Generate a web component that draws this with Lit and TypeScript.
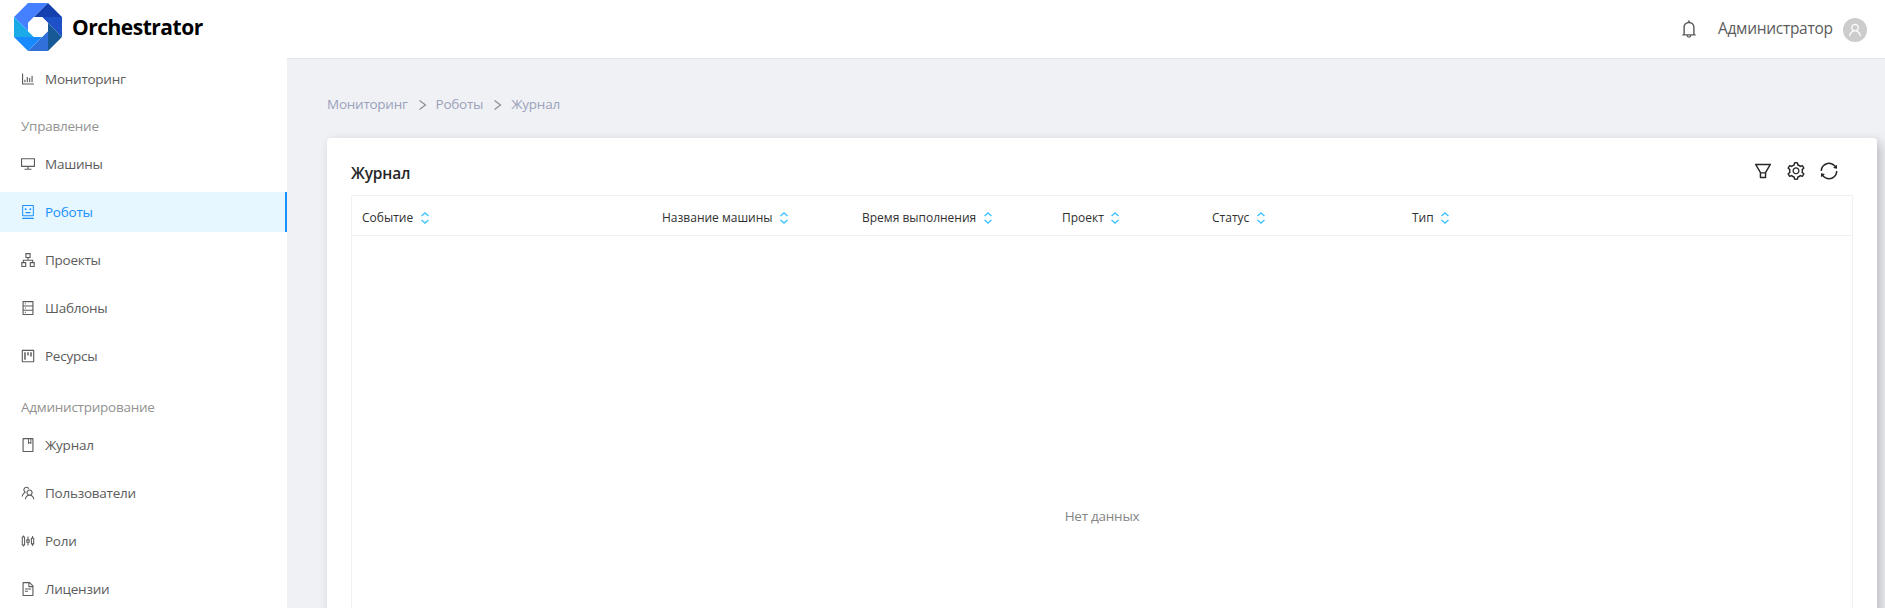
import { LitElement, html, css, svg } from "lit";
import { customElement, property } from "lit/decorators.js";

const ICONS: Record<string, string> = {
  chart: "M888 792H200V168c0-4.4-3.6-8-8-8h-56c-4.4 0-8 3.6-8 8v688c0 4.4 3.6 8 8 8h752c4.4 0 8-3.6 8-8v-56c0-4.4-3.6-8-8-8zM288 712h56c4.4 0 8-3.6 8-8V560c0-4.4-3.6-8-8-8h-56c-4.4 0-8 3.6-8 8v144c0 4.4 3.6 8 8 8zM440 712h56c4.4 0 8-3.6 8-8V384c0-4.4-3.6-8-8-8h-56c-4.4 0-8 3.6-8 8v320c0 4.4 3.6 8 8 8zM592 712h56c4.4 0 8-3.6 8-8V462c0-4.4-3.6-8-8-8h-56c-4.4 0-8 3.6-8 8v242c0 4.4 3.6 8 8 8zM744 712h56c4.4 0 8-3.6 8-8V304c0-4.4-3.6-8-8-8h-56c-4.4 0-8 3.6-8 8v400c0 4.4 3.6 8 8 8z",
  desktop: "M928 140H96c-17.7 0-32 14.3-32 32v496c0 17.7 14.3 32 32 32h380v112H304c-8.8 0-16 7.2-16 16v48c0 4.4 3.6 8 8 8h432c4.4 0 8-3.6 8-8v-48c0-8.8-7.2-16-16-16H548V700h380c17.7 0 32-14.3 32-32V172c0-17.7-14.3-32-32-32zm-40 488H136V212h752v416z",
  robot: "M300 328a60 60 0 1 0 120 0 60 60 0 1 0-120 0zM852 64H172c-17.7 0-32 14.3-32 32v660c0 17.7 14.3 32 32 32h680c17.7 0 32-14.3 32-32V96c0-17.7-14.3-32-32-32zm-32 660H204V128h616v596zM604 328a60 60 0 1 0 120 0 60 60 0 1 0-120 0zm250.2 556H169.8c-16.5 0-29.8 14.3-29.8 32v36c0 4.4 3.3 8 7.4 8h729.1c4.1 0 7.4-3.6 7.4-8v-36c.1-17.7-13.2-32-29.7-32zM664 508H360c-4.4 0-8 3.6-8 8v60c0 4.4 3.6 8 8 8h304c4.4 0 8-3.6 8-8v-60c0-4.4-3.6-8-8-8z",
  cluster: "M344 64h336v320H548v108h298v148h98v320H624V640h150v-76H250v76h150v320H80V640h98V492h298V384H344zM416 136v176h192V136zM152 712v176h176V712zM696 712v176h176V712z",
  database: "M832 64H192c-17.7 0-32 14.3-32 32v832c0 17.7 14.3 32 32 32h640c17.7 0 32-14.3 32-32V96c0-17.7-14.3-32-32-32zm-600 72h560v208H232V136zm560 480H232V408h560v208zm0 272H232V680h560v208zM304 240a40 40 0 1 0 80 0 40 40 0 1 0-80 0zm0 272a40 40 0 1 0 80 0 40 40 0 1 0-80 0zm0 272a40 40 0 1 0 80 0 40 40 0 1 0-80 0z",
  project: "M280 752h80c4.4 0 8-3.6 8-8V280c0-4.4-3.6-8-8-8h-80c-4.4 0-8 3.6-8 8v464c0 4.4 3.6 8 8 8zm192-280h80c4.4 0 8-3.6 8-8V280c0-4.4-3.6-8-8-8h-80c-4.4 0-8 3.6-8 8v184c0 4.4 3.6 8 8 8zm192 72h80c4.4 0 8-3.6 8-8V280c0-4.4-3.6-8-8-8h-80c-4.4 0-8 3.6-8 8v256c0 4.4 3.6 8 8 8zm216-432H144c-17.7 0-32 14.3-32 32v736c0 17.7 14.3 32 32 32h736c17.7 0 32-14.3 32-32V144c0-17.7-14.3-32-32-32zm-40 728H184V184h656v656z",
  book: "M832 64H192c-17.7 0-32 14.3-32 32v832c0 17.7 14.3 32 32 32h640c17.7 0 32-14.3 32-32V96c0-17.7-14.3-32-32-32zm-260 72h96v209.9L621.5 312 572 347.4V136zm220 752H232V136h280v296.9c0 3.3 1 6.6 3 9.3a15.9 15.9 0 0 0 22.3 3.7l83.8-59.9 81.4 59.4c2.7 2 6 3.1 9.4 3.1 8.8 0 16-7.2 16-16V136h64v752z",
  team: "M824.2 699.9a301.55 301.55 0 0 0-86.4-60.4C783.1 602.8 812 546.8 812 484c0-110.8-92.4-201.7-203.2-200-109.1 1.7-197 90.6-197 200 0 62.8 29 118.8 74.2 155.5a300.95 300.95 0 0 0-86.4 60.4C345 754.6 314 826.8 312 903.8a8 8 0 0 0 8 8.2h56c4.3 0 7.9-3.4 8-7.7 1.9-58 25.4-112.3 66.7-153.5A226.62 226.62 0 0 1 612 684c60.9 0 118.2 23.7 161.3 66.8C814.6 792 838 846.3 840 904.3c.1 4.3 3.7 7.7 8 7.7h56a8 8 0 0 0 8-8.2c-2-77-33-149.2-87.8-203.9zM612 612c-34.2 0-66.4-13.3-90.5-37.5a126.86 126.86 0 0 1-37.5-91.8c.3-32.8 13.4-64.5 36.3-88 24-24.6 56.1-38.3 90.4-38.7 33.9-.3 66.8 12.9 91 36.6 24.8 24.3 38.4 56.8 38.4 91.4 0 34.2-13.3 66.3-37.5 90.5A127.3 127.3 0 0 1 612 612zM361.5 510.4c-.9-8.7-1.4-17.5-1.4-26.4 0-15.9 1.5-31.4 4.3-46.5.7-3.6-1.2-7.3-4.5-8.8-13.6-6.1-26.1-14.5-36.9-25.1a127.54 127.54 0 0 1-38.7-95.4c.9-32.1 13.8-62.6 36.3-85.6 24.7-25.3 57.9-39.1 93.2-38.7 31.9.3 62.7 12.6 86 34.4 7.9 7.4 14.7 15.6 20.4 24.4 2 3.1 5.9 4.4 9.3 3.2 17.6-6.1 36.2-10.4 55.3-12.4 5.6-.6 8.8-6.6 6.3-11.6-32.5-64.3-98.9-108.7-175.7-109.9-110.9-1.7-203.3 89.2-203.3 199.9 0 62.8 28.9 118.8 74.2 155.5-31.8 14.7-61.1 35-86.5 60.4-54.8 54.7-85.8 126.9-87.8 204a8 8 0 0 0 8 8.2h56.1c4.3 0 7.9-3.4 8-7.7 1.9-58 25.4-112.3 66.7-153.5 29.4-29.4 65.4-49.8 104.7-59.7 3.9-1 6.5-4.7 6-8.7z",
  sliders: "M320 224h-66v-56c0-4.4-3.6-8-8-8h-52c-4.4 0-8 3.6-8 8v56h-66c-4.4 0-8 3.6-8 8v560c0 4.4 3.6 8 8 8h66v56c0 4.4 3.6 8 8 8h52c4.4 0 8-3.6 8-8v-56h66c4.4 0 8-3.6 8-8V232c0-4.4-3.6-8-8-8zm-60 508h-80V292h80v440zm644-436h-66v-96c0-4.4-3.6-8-8-8h-52c-4.4 0-8 3.6-8 8v96h-66c-4.4 0-8 3.6-8 8v416c0 4.4 3.6 8 8 8h66v96c0 4.4 3.6 8 8 8h52c4.4 0 8-3.6 8-8v-96h66c4.4 0 8-3.6 8-8V304c0-4.4-3.6-8-8-8zm-60 364h-80V364h80v296zM612 404h-66V232c0-4.4-3.6-8-8-8h-52c-4.4 0-8 3.6-8 8v172h-66c-4.4 0-8 3.6-8 8v200c0 4.4 3.6 8 8 8h66v172c0 4.4 3.6 8 8 8h52c4.4 0 8-3.6 8-8V620h66c4.4 0 8-3.6 8-8V412c0-4.4-3.6-8-8-8zm-60 145a3 3 0 0 1-3 3h-74a3 3 0 0 1-3-3v-74a3 3 0 0 1 3-3h74a3 3 0 0 1 3 3v74z",
  file: "M854.6 288.6L639.4 73.4c-6-6-14.1-9.4-22.6-9.4H192c-17.7 0-32 14.3-32 32v832c0 17.7 14.3 32 32 32h640c17.7 0 32-14.3 32-32V311.3c0-8.5-3.4-16.7-9.4-22.7zM790.2 326H602V137.8L790.2 326zm1.8 562H232V136h302v216a42 42 0 0 0 42 42h216v494zM504 618H320c-4.4 0-8 3.6-8 8v48c0 4.4 3.6 8 8 8h184c4.4 0 8-3.6 8-8v-48c0-4.4-3.6-8-8-8zM312 490v48c0 4.4 3.6 8 8 8h384c4.4 0 8-3.6 8-8v-48c0-4.4-3.6-8-8-8H320c-4.4 0-8 3.6-8 8z",
  bell: "M816 768h-24V428c0-141.1-104.3-257.7-240-277.1V112c0-22.1-17.9-40-40-40s-40 17.9-40 40v38.9c-135.7 19.4-240 136-240 277.1v340h-24c-17.7 0-32 14.3-32 32v32c0 4.4 3.6 8 8 8h216c0 61.8 50.2 112 112 112s112-50.2 112-112h216c4.4 0 8-3.6 8-8v-32c0-17.7-14.3-32-32-32zM512 888c-26.5 0-48-21.5-48-48h96c0 26.5-21.5 48-48 48zM304 768V428c0-55.6 21.6-107.8 60.9-147.1S456.4 220 512 220c55.6 0 107.8 21.6 147.1 60.9S720 372.4 720 428v340H304z",
  user: "M858.5 763.6a374 374 0 0 0-80.6-119.5 375.63 375.63 0 0 0-119.5-80.6c-.4-.2-.8-.3-1.2-.5C719.5 518 760 444.7 760 362c0-137-111-248-248-248S264 225 264 362c0 82.7 40.5 156 102.8 201.1-.4.2-.8.3-1.2.5-44.8 18.9-85 46-119.5 80.6a375.63 375.63 0 0 0-80.6 119.5A371.7 371.7 0 0 0 136 901.8a8 8 0 0 0 8 8.2h60c4.4 0 7.9-3.5 8-7.8 2-77.2 33-149.5 87.8-204.3 56.7-56.7 132-87.9 212.2-87.9s155.5 31.2 212.2 87.9C779 752.7 810 825 812 902.2c.1 4.4 3.6 7.8 8 7.8h60a8 8 0 0 0 8-8.2c-1-47.8-10.9-94.3-29.5-138.2zM512 534c-45.9 0-89.1-17.9-121.6-50.4S340 407.9 340 362c0-45.9 17.9-89.1 50.4-121.6S466.1 190 512 190s89.1 17.9 121.6 50.4S684 316.1 684 362c0 45.9-17.9 89.1-50.4 121.6S557.9 534 512 534z",
  filter: "M880.1 154H143.9c-24.5 0-39.8 26.7-27.5 48L349 597.4V838c0 17.7 14.2 32 31.8 32h262.4c17.6 0 31.8-14.3 31.8-32V597.4L907.7 202c12.2-21.3-3.1-48-27.6-48zM603.4 798H420.6V642h182.9v156zm9.6-236.6l-9.5 16.6h-183l-9.5-16.6L212.7 226h598.6L613 561.4z",
  setting: "M924.8 625.7l-65.5-56c3.1-19 4.7-38.4 4.7-57.8s-1.6-38.8-4.7-57.8l65.5-56a32.03 32.03 0 0 0 9.3-35.2l-.9-2.6a443.74 443.74 0 0 0-79.7-137.9l-1.8-2.1a32.12 32.12 0 0 0-35.1-9.5l-81.3 28.9c-30-24.6-63.5-44-99.7-57.6l-15.7-85a32.05 32.05 0 0 0-25.8-25.7l-2.7-.5c-52.1-9.4-106.9-9.4-159 0l-2.7.5a32.05 32.05 0 0 0-25.8 25.7l-15.8 85.4a351.86 351.86 0 0 0-99 57.4l-81.9-29.1a32 32 0 0 0-35.1 9.5l-1.8 2.1a446.02 446.02 0 0 0-79.7 137.9l-.9 2.6c-4.5 12.5-.8 26.5 9.3 35.2l66.3 56.6c-3.1 18.8-4.6 38-4.6 57.1 0 19.2 1.5 38.4 4.6 57.1L99 625.5a32.03 32.03 0 0 0-9.3 35.2l.9 2.6c18.1 50.4 44.9 96.9 79.7 137.9l1.8 2.1a32.12 32.12 0 0 0 35.1 9.5l81.9-29.1c29.8 24.5 63.1 43.9 99 57.4l15.8 85.4a32.05 32.05 0 0 0 25.8 25.7l2.7.5a449.4 449.4 0 0 0 159 0l2.7-.5a32.05 32.05 0 0 0 25.8-25.7l15.7-85a350 350 0 0 0 99.7-57.6l81.3 28.9a32 32 0 0 0 35.1-9.5l1.8-2.1c34.8-41.1 61.6-87.5 79.7-137.9l.9-2.6c4.5-12.3.8-26.3-9.3-35zM788.3 465.9c2.5 15.1 3.8 30.6 3.8 46.1s-1.3 31-3.8 46.1l-6.6 40.1 74.7 63.9a370.03 370.03 0 0 1-42.6 73.6L721 702.8l-31.4 25.8c-23.9 19.6-50.5 35-79.3 45.8l-38.1 14.3-17.9 97a377.5 377.5 0 0 1-85 0l-17.9-97.2-37.8-14.5c-28.5-10.8-55-26.2-78.7-45.7l-31.4-25.9-93.4 33.2c-17-22.9-31.2-47.6-42.6-73.6l75.5-64.5-6.5-40c-2.4-14.9-3.7-30.3-3.7-45.5 0-15.3 1.2-30.6 3.7-45.5l6.5-40-75.5-64.5c11.3-26.1 25.6-50.7 42.6-73.6l93.4 33.2 31.4-25.9c23.7-19.5 50.2-34.9 78.7-45.7l37.9-14.3 17.9-97.2c28.1-3.2 56.8-3.2 85 0l17.9 97 38.1 14.3c28.7 10.8 55.4 26.2 79.3 45.8l31.4 25.8 92.8-32.9c17 22.9 31.2 47.6 42.6 73.6L781.8 426l6.5 39.9zM512 326c-97.2 0-176 78.8-176 176s78.8 176 176 176 176-78.8 176-176-78.8-176-176-176zm79.2 255.2A111.6 111.6 0 0 1 512 614c-29.9 0-58-11.7-79.2-32.8A111.6 111.6 0 0 1 400 502c0-29.9 11.7-58 32.8-79.2C454 401.6 482.1 390 512 390c29.9 0 58 11.6 79.2 32.8A111.6 111.6 0 0 1 624 502c0 29.9-11.7 58-32.8 79.2z",
  sync: "M168 504.2c1-43.7 10-86.1 26.9-126 17.3-41 42.1-77.7 73.7-109.4S337 212.3 378 195c42.4-17.9 87.4-27 133.9-27s91.5 9.1 133.8 27A341.5 341.5 0 0 1 755 268.8c9.9 9.9 19.2 20.4 27.8 31.4l-60.2 47a8 8 0 0 0 3 14.1l175.7 43c5 1.2 9.9-2.6 9.9-7.7l.8-180.9c0-6.7-7.7-10.5-12.9-6.3l-56.4 44.1C765.8 155.1 646.2 92 511.8 92 282.7 92 96.3 275.6 92 503.8a8 8 0 0 0 8 8.2h60c4.4 0 7.9-3.5 8-7.8zm756 7.8h-60c-4.4 0-7.9 3.5-8 7.8-1 43.7-10 86.1-26.9 126-17.3 41-42.1 77.8-73.7 109.4A342.45 342.45 0 0 1 512.1 856a342.24 342.24 0 0 1-243.2-100.8c-9.9-9.9-19.2-20.4-27.8-31.4l60.2-47a8 8 0 0 0-3-14.1l-175.7-43c-5-1.2-9.9 2.6-9.9 7.7l-.7 181c0 6.7 7.7 10.5 12.9 6.3l56.4-44.1C258.2 868.9 377.8 932 512.2 932c229.2 0 415.5-183.7 419.8-411.8a8 8 0 0 0-8-8.2z",
};

@customElement("ui-icon")
class UiIcon extends LitElement {
  @property() name = "";
  static styles = css`
    :host { display: block; flex: none; width: 14px; height: 14px; }
    svg { display: block; width: 100%; height: 100%; fill: currentColor; }
  `;
  render() {
    return html`<svg viewBox="64 64 896 896">${svg`<path fill-rule="evenodd" d=${ICONS[this.name]}></path>`}</svg>`;
  }
}

type Entry = { label: string; icon?: string; active?: boolean };

const MENU: Entry[] = [
  { label: "Мониторинг", icon: "chart" },
  { label: "Управление" },
  { label: "Машины", icon: "desktop" },
  { label: "Роботы", icon: "robot", active: true },
  { label: "Проекты", icon: "cluster" },
  { label: "Шаблоны", icon: "database" },
  { label: "Ресурсы", icon: "project" },
  { label: "Администрирование" },
  { label: "Журнал", icon: "book" },
  { label: "Пользователи", icon: "team" },
  { label: "Роли", icon: "sliders" },
  { label: "Лицензии", icon: "file" },
];

const COLUMNS = ["Событие", "Название машины", "Время выполнения", "Проект", "Статус", "Тип"];

@customElement("app-root")
class AppRoot extends LitElement {
  static styles = css`
    :host {
      display: flex; flex-direction: column; height: 608px; overflow: hidden;
      background: #fff; color: #5c5c5c;
      font: 400 13.5px/20px "Open Sans", "Noto Sans", sans-serif;
    }
    * { box-sizing: border-box; }
    .top { flex: none; height: 58px; display: flex; align-items: center; padding: 0 18px 0 14px; }
    .logo { width: 48px; height: 48px; margin-top: -4px; }
    .brand { margin: -4px auto 0 10px; color: #000; font-size: 21px; line-height: 28px; font-weight: 700; letter-spacing: -0.5px; }
    .bell { width: 18px; height: 18px; margin-right: 20px; }
    .who { width: 115px; white-space: nowrap; font-size: 15.5px; line-height: 22px; letter-spacing: -0.3px; margin: -2px 10px 0 0; }
    .avatar { width: 24px; height: 24px; margin-top: 2px; border-radius: 50%; background: #ccc; color: #fff; display: grid; place-items: center; }
    .body { flex: 1; min-height: 0; display: flex; }
    .side { width: 287px; flex: none; display: flex; flex-direction: column; overflow: hidden; padding-top: 1px; }
    .item { flex: none; height: 40px; margin-bottom: 8px; padding-left: 21px; display: flex; align-items: center; gap: 10px; }
    .item.active { background: #e6f7ff; color: #1890ff; border-right: 2px solid #1890ff; }
    .label { letter-spacing: -0.25px; }
    .group { flex: none; height: 37px; padding: 9px 0 0 21px; color: #929292; letter-spacing: -0.25px; }
    .group.late { height: 41px; padding-top: 13px; }
    .main { flex: 1; min-width: 0; background: #f0f1f5; border-top: 1px solid #e3e5ec; padding: 35px 8px 0 40px; display: flex; flex-direction: column; }
    .crumbs { display: flex; align-items: center; height: 20px; color: #9ba2ba; letter-spacing: -0.25px; }
    .sep { width: 9px; height: 12px; margin: 2px 9px 0 10px; fill: none; stroke: #8c8c8c; stroke-width: 1.2; }
    .card { margin-top: 24px; height: 520px; flex: none; background: #fff; border-radius: 4px; padding: 23px 24px 0; display: flex; flex-direction: column; box-shadow: 4px 4px 12px rgba(0, 0, 0, .22); }
    .bar { height: 34px; flex: none; display: flex; align-items: flex-start; color: #262626; }
    .title { margin-right: auto; font-size: 15.5px; line-height: 24px; font-weight: 550; letter-spacing: -0.15px; }
    .tools { display: flex; gap: 15px; padding: 1px 15px 0 0; }
    .tools ui-icon { width: 18px; height: 18px; }
    .table { flex: 1; border: 1px solid #f0f0f0; display: flex; flex-direction: column; }
    .head { height: 40px; display: grid; grid-template-columns: 300px 200px 200px 150px 200px 1fr; border-bottom: 1px solid #f0f0f0; color: #303030; font-size: 12px; }
    .cell { display: flex; align-items: center; padding: 5px 10px 0; }
    .sort { width: 8px; height: 12px; margin-left: 7.5px; fill: none; stroke: #40c4ff; stroke-width: 1.4; }
    .empty { margin-top: 270px; text-align: center; color: #858585; letter-spacing: -0.25px; }
  `;

  private sep() {
    return html`<svg class="sep" viewBox="0 0 9 12"><path d="M1.5 1.5 7.5 6 1.5 10.5"></path></svg>`;
  }

  private entry(e: Entry) {
    if (!e.icon) return html`<div class="group ${e.label.startsWith("А") ? "late" : ""}">${e.label}</div>`;
    return html`<div class="item ${e.active ? "active" : ""}"><ui-icon name=${e.icon}></ui-icon><span class="label">${e.label}</span></div>`;
  }

  render() {
    return html`
      <header class="top">
        <svg class="logo" viewBox="0 0 48 48">
          <path fill="#4480ff" d="M0 14 14 0H34L14 20V28z"></path>
          <path fill="#143fae" d="M34 0 48 14H20z"></path>
          <path fill="#1e50c8" d="M28 14H48V34z"></path>
          <path fill="#165996" d="M34 20 48 34 34 48z"></path>
          <path fill="#3070d8" d="M34 28V48H14z"></path>
          <path fill="#178aff" d="M0 34H28L14 48z"></path>
          <path fill="#1aaae8" d="M0 14 20 34H0z"></path>
          <path fill="#fff" d="M20 14h8l6 6v8l-6 6h-8l-6-6v-8z"></path>
        </svg>
        <div class="brand">Orchestrator</div>
        <ui-icon class="bell" name="bell"></ui-icon>
        <div class="who">Администратор</div>
        <div class="avatar"><ui-icon name="user"></ui-icon></div>
      </header>
      <div class="body">
        <nav class="side">${MENU.map((e) => this.entry(e))}</nav>
        <main class="main">
          <div class="crumbs"><span>Мониторинг</span>${this.sep()}<span>Роботы</span>${this.sep()}<span>Журнал</span></div>
          <section class="card">
            <div class="bar">
              <div class="title">Журнал</div>
              <div class="tools">
                <ui-icon name="filter"></ui-icon><ui-icon name="setting"></ui-icon><ui-icon name="sync"></ui-icon>
              </div>
            </div>
            <div class="table">
              <div class="head">
                ${COLUMNS.map((c) => html`<div class="cell"><span>${c}</span><svg class="sort" viewBox="0 0 8 12"><path d="M.5 4 4 1 7.5 4M.5 8 4 11 7.5 8"></path></svg></div>`)}
              </div>
              <div class="empty">Нет данных</div>
            </div>
          </section>
        </main>
      </div>
    `;
  }
}
